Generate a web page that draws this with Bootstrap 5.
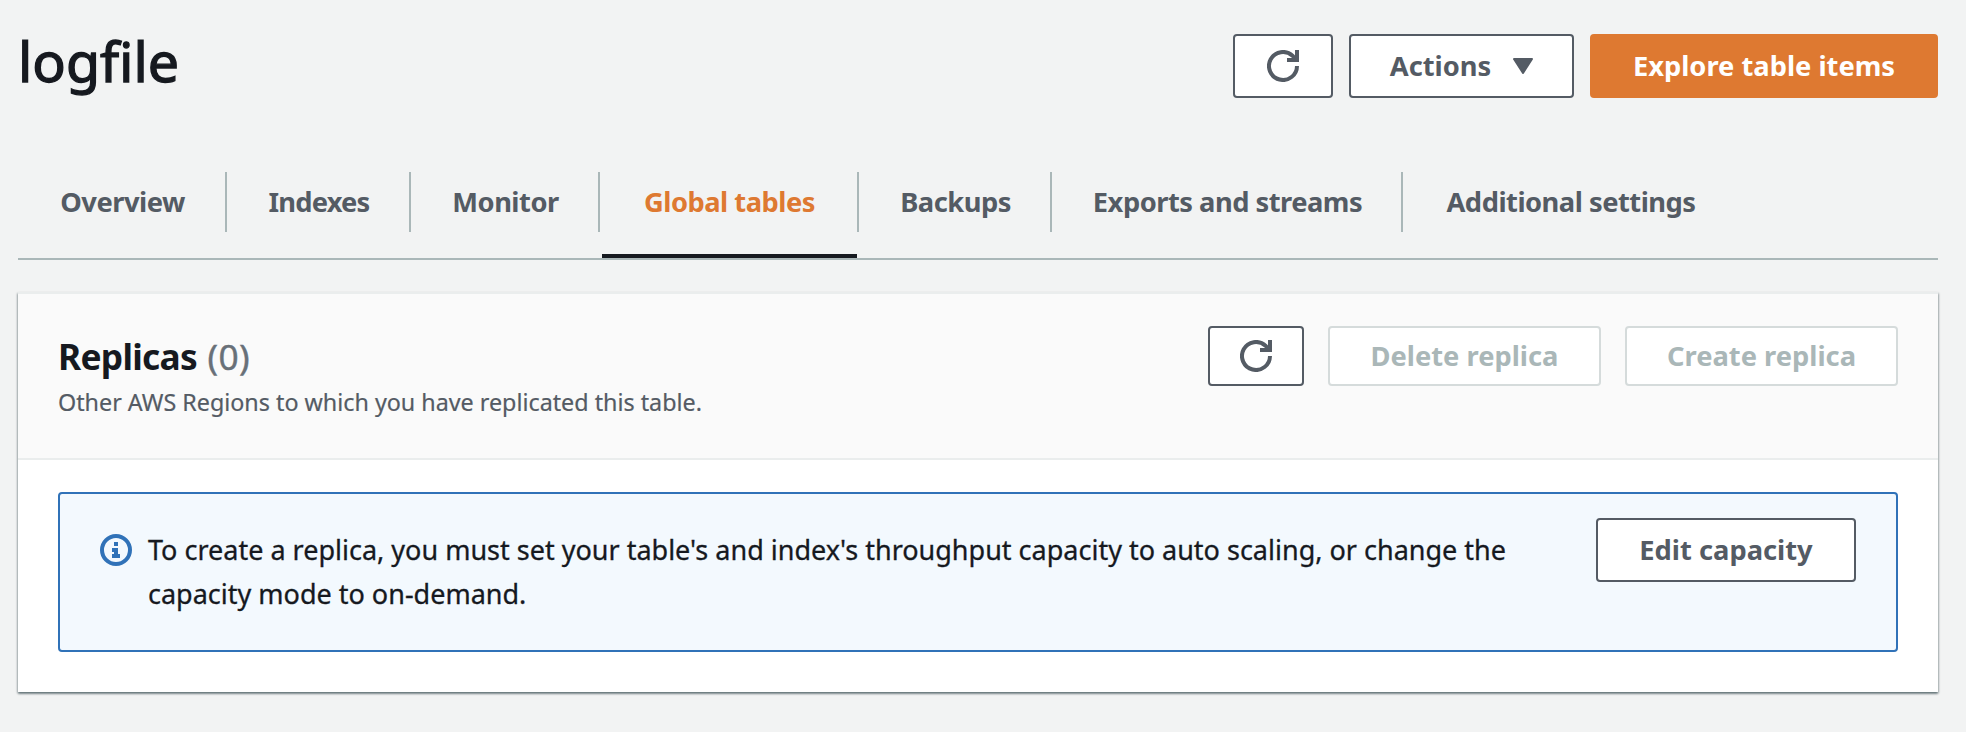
<!DOCTYPE html>
<html lang="en">
<head>
<meta charset="utf-8">
<meta name="viewport" content="width=device-width, initial-scale=1">
<title>logfile</title>
<link href="https://cdn.jsdelivr.net/npm/bootstrap@5.3.0/dist/css/bootstrap.min.css" rel="stylesheet">
<style>
body{background:#f2f3f3;color:#16191f;font-family:"Noto Sans","Open Sans",sans-serif;font-size:27px;min-height:100vh}
.page{padding:34px 28px 38px 18px}
.page-title{font-size:55.5px;line-height:64px;font-weight:400;-webkit-text-stroke:1.3px #16191f;margin:-5px 0 0}
.console-btn{--bs-btn-font-size:27.3px;--bs-btn-font-weight:700;--bs-btn-line-height:1;--bs-btn-padding-x:0;--bs-btn-padding-y:0;--bs-btn-border-width:2px;--bs-btn-border-radius:4px;--bs-btn-bg:#fff;--bs-btn-color:#545b64;--bs-btn-border-color:#545b64;--bs-btn-disabled-bg:#fff;--bs-btn-disabled-color:#aab7b8;--bs-btn-disabled-border-color:#d5dbdb;--bs-btn-disabled-opacity:1;height:64px;display:inline-flex;align-items:center;justify-content:center;white-space:nowrap}
.console-btn.short{height:60px}
.console-btn.orange{--bs-btn-bg:#de7931;--bs-btn-color:#fff;--bs-btn-border-color:#de7931;width:348px}
.w-refresh{width:100px}.w-refresh-sm{width:96px}.w-actions{width:225px}.w-replica{width:273px}.w-edit{width:260px}
.w-actions svg{margin-left:22px}
.tabs{margin-top:74px;height:88px;border-bottom:2px solid #aab7b8}
.tabs .nav-link{position:relative;height:60px;padding:0 0 0 2px;color:#545b64;font-size:27.3px;font-weight:700;letter-spacing:-.5px;line-height:60px;text-align:center;border-right:2px solid #aab7b8;white-space:nowrap}
.tabs .nav-link:hover{color:#545b64}
.tabs .nav-link.active{color:#de7931}
.tabs .nav-link.active::after{content:"";position:absolute;left:2px;right:0;top:82px;height:4px;background:#16191f}
.t1{width:209px}.t2{width:184px}.t3{width:189px}.t4{width:259px}.t5{width:193px}.t6{width:351px}.t7{width:334px}
.tabs .t2 .nav-link{letter-spacing:-.8px}
.tabs .t7 .nav-link{border-right:0}
.panel{--bs-card-border-width:0;--bs-card-border-radius:0;--bs-card-inner-border-radius:0;--bs-card-bg:#fff;margin-top:32px;height:400px;border-top:2px solid #eaeded;box-shadow:0 2px 2px 0 rgba(0,28,36,.4),1px 1px 2px 0 rgba(0,28,36,.2),-1px 1px 2px 0 rgba(0,28,36,.2)}
.panel-head{height:166px;background:#fafafa;border-bottom:2px solid #eaeded;padding:32px 40px 0}
.panel-title{font-size:35.3px;line-height:48px;font-weight:700;letter-spacing:-.7px;margin:6px 0 0}
.panel-title span{font-weight:400;color:#687078;letter-spacing:.3px;margin-left:2px;-webkit-text-stroke:.4px #687078}
.panel-desc{font-size:23.3px;line-height:36px;color:#545b64;margin:4px 0 0;-webkit-text-stroke:.2px #545b64}
.flash{--bs-alert-bg:#f3f9fe;--bs-alert-border-color:#3072b8;--bs-alert-color:#16191f;border-width:2px;border-radius:4px;margin:32px 40px 0;height:160px;padding:24px 40px}
.flash p{width:1390px;line-height:44px;font-size:27px;-webkit-text-stroke:.3px #16191f;margin:10px 0 0 16px}
.flash svg{margin-top:16px}
</style>
</head>
<body>
<main class="page">
  <header class="d-flex justify-content-between align-items-start">
    <h1 class="page-title">logfile</h1>
    <div class="d-flex gap-3">
      <button class="btn console-btn w-refresh" aria-label="Refresh"><svg width="32" height="32" viewBox="0 0 32 32" fill="none" stroke="currentColor" stroke-width="4"><path d="M30 16A14 14 0 1 1 25.5 5.7L29 9.5M30 0V10H20"/></svg></button>
      <button class="btn console-btn w-actions">Actions<svg width="20" height="16" viewBox="0 0 20 16" fill="currentColor" stroke="currentColor" stroke-width="2" stroke-linejoin="round"><path d="M1 1H19L10 15Z"/></svg></button>
      <button class="btn console-btn orange">Explore table items</button>
    </div>
  </header>
  <ul class="nav tabs flex-nowrap">
    <li class="nav-item t1"><a class="nav-link" href="#">Overview</a></li>
    <li class="nav-item t2"><a class="nav-link" href="#">Indexes</a></li>
    <li class="nav-item t3"><a class="nav-link" href="#">Monitor</a></li>
    <li class="nav-item t4"><a class="nav-link active" href="#">Global tables</a></li>
    <li class="nav-item t5"><a class="nav-link" href="#">Backups</a></li>
    <li class="nav-item t6"><a class="nav-link" href="#">Exports and streams</a></li>
    <li class="nav-item t7"><a class="nav-link" href="#">Additional settings</a></li>
  </ul>
  <section class="card panel">
    <div class="panel-head d-flex justify-content-between align-items-start">
      <div>
        <h2 class="panel-title">Replicas <span>(0)</span></h2>
        <p class="panel-desc">Other AWS Regions to which you have replicated this table.</p>
      </div>
      <div class="d-flex gap-4">
        <button class="btn console-btn short w-refresh-sm" aria-label="Refresh replicas"><svg width="32" height="32" viewBox="0 0 32 32" fill="none" stroke="currentColor" stroke-width="4"><path d="M30 16A14 14 0 1 1 25.5 5.7L29 9.5M30 0V10H20"/></svg></button>
        <button class="btn console-btn short w-replica" disabled>Delete replica</button>
        <button class="btn console-btn short w-replica" disabled>Create replica</button>
      </div>
    </div>
    <div class="alert flash d-flex align-items-start">
      <svg class="flex-shrink-0" width="32" height="32" viewBox="0 0 32 32" fill="none" stroke="#3072b8" stroke-width="4"><circle cx="16" cy="16" r="14"/><path d="M14 10H18M12 16H18M16 14V24M12 22H20"/></svg>
      <p>To create a replica, you must set your table's and index's throughput capacity to auto scaling, or change the capacity mode to on-demand.</p>
      <button class="btn console-btn w-edit ms-auto">Edit capacity</button>
    </div>
  </section>
</main>
<script src="https://cdn.jsdelivr.net/npm/bootstrap@5.3.0/dist/js/bootstrap.bundle.min.js"></script>
</body>
</html>
